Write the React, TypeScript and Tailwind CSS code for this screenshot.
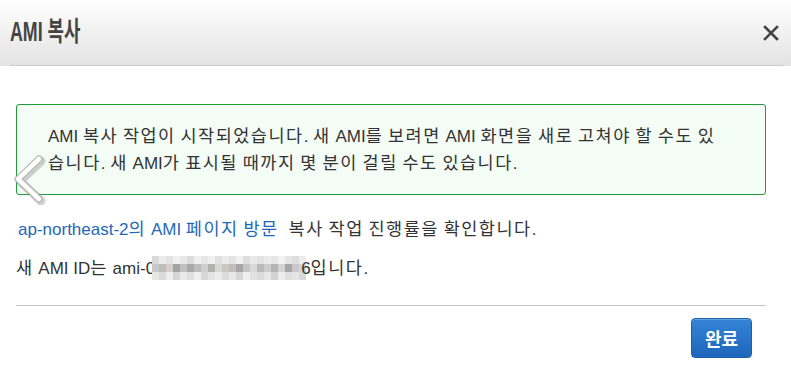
import { Fragment } from "react";

const font = { fontFamily: '"Liberation Sans", Arial, "Noto Sans CJK KR", sans-serif' };

// wrap hangul runs so they space out like the original Malgun rendering
function K({ t }: { t: string }) {
  return (
    <>
      {t.split(/([\uAC00-\uD7A3]+)/).map((s, i) =>
        /[\uAC00-\uD7A3]/.test(s) ? (
          <span key={i} className="text-[17.5px] tracking-[1.5px]" style={{ fontFamily: '"Noto Sans CJK KR", sans-serif' }}>{s}</span>
        ) : (
          <Fragment key={i}>{s}</Fragment>
        )
      )}
    </>
  );
}

// pixelated cells standing in for the masked AMI id
const blur = [
  ["#d9d9d9", "#ececec", "#e3e3e3", "#f0f0f0", "#e8e8e8", "#dcdcdc", "#eeeeee", "#e6e6e6", "#efefef", "#e0e0e0", "#ebebeb", "#e4e4e4", "#f1f1f1", "#dedede", "#e9e9e9", "#e2e2e2", "#eaeaea", "#e7e7e7", "#f2f2f2", "#e5e5e5", "#dddddd", "#ededed"],
  ["#c8c8c8", "#bdbdbd", "#d4cfca", "#a4a4a4", "#c1c1c1", "#a9a9a9", "#bcbcbc", "#cfcfcf", "#b1b1b1", "#d6d6d6", "#cac6c2", "#bfbfbf", "#a7a7a7", "#c5c5c5", "#d8d8d8", "#bababa", "#cdcdcd", "#b4b4b4", "#d2d2d2", "#a6a6a6", "#c9c9c9", "#d3d3d3"],
  ["#e6e6e6", "#dadada", "#eeeeee", "#d5d5d5", "#e9e9e9", "#e0e0e0", "#f0f0f0", "#d8d8d8", "#e3e3e3", "#ececec", "#dcdcdc", "#e8e8e8", "#d6d6d6", "#efefef", "#e2e2e2", "#dbdbdb", "#e7e7e7", "#d3d3d3", "#ededed", "#dfdfdf", "#e5e5e5", "#d9d9d9"],
];

export default function App() {
  return (
    <div className="w-[791px] h-[367px] bg-white relative overflow-hidden text-[#333]" style={font}>
      <div className="h-[66px] bg-gradient-to-b from-white to-[#e3e3e3]">
        <div className="h-full ml-[10px] mr-[8px] flex items-center justify-between pr-[4px] border-b border-[#c9c9c9]">
          <h1 className="text-[27px] font-bold text-[#444] scale-x-[0.66] origin-left whitespace-nowrap leading-none -mt-[1px]">AMI 복사</h1>
          <svg width="16" height="16" viewBox="0 0 16 16" className="mt-[1px]">
            <path d="M2 2 L14 14 M14 2 L2 14" stroke="#444" strokeWidth="2.6" strokeLinecap="square" />
          </svg>
        </div>
      </div>

      <div className="ml-4 w-[750px] pt-[38px]">
        <div className="h-[91px] border border-[#1e9b3c] rounded-[3px] bg-[#f4fcf6] pl-[31px] pt-[16px] text-[17px] whitespace-nowrap">
          <div className="h-[27px] leading-[27px]"><K t="AMI 복사 작업이 시작되었습니다. 새 AMI를 보려면 AMI 화면을 새로 고쳐야 할 수도 있" /></div>
          <div className="h-[27px] leading-[27px]"><K t="습니다. 새 AMI가 표시될 때까지 몇 분이 걸릴 수도 있습니다." /></div>
        </div>

        <p className="mt-[21px] pl-[2px] h-[24px] text-[17px] leading-[24px] whitespace-nowrap">
          <span className="text-[#1f68b8]"><K t="ap-northeast-2의 AMI 페이지 방문" /></span>
          <span className="ml-[10px]"><K t="복사 작업 진행률을 확인합니다." /></span>
        </p>

        <p className="mt-[16px] h-[24px] text-[17px] leading-[24px] flex items-center whitespace-nowrap">
          <span><K t="새 AMI ID는 ami-0" /></span>
          <span className="inline-grid grid-cols-[repeat(22,7px)] grid-rows-[repeat(3,8px)] -ml-[3px]">
            {blur.map((row, r) => (
              <Fragment key={r}>
                {row.map((c, i) => (
                  <span key={i} style={{ background: c }} />
                ))}
              </Fragment>
            ))}
          </span>
          <span className="-ml-[5px]"><K t="6입니다." /></span>
        </p>

        <div className="mt-[25px] border-t border-[#c4c4c4]" />

        <div className="flex justify-end pr-[14px] pt-[12px]">
          <button className="w-[61px] h-[40px] rounded-[4px] border border-[#1d5fa8] bg-gradient-to-b from-[#3384d8] to-[#1e66bb] text-white font-bold text-[18px] shadow-[inset_0_1px_0_rgba(255,255,255,0.25)]" style={{ fontFamily: '"Noto Sans CJK KR", sans-serif' }}>
            완료
          </button>
        </div>
      </div>

      {/* carousel arrow overlay */}
      <svg width="40" height="52" viewBox="0 0 40 52" className="absolute left-[10px] top-[153px]">
        <path d="M30 7 L9 27 L30 47" fill="none" stroke="#7a7a7a" strokeWidth="9" strokeLinecap="round" strokeLinejoin="round" opacity="0.35" transform="translate(1 1)" />
        <path d="M29 6 L8 26 L29 46" fill="none" stroke="#b5b5b5" strokeWidth="7" strokeLinecap="round" strokeLinejoin="round" />
        <path d="M29 6 L8 26 L29 46" fill="none" stroke="#ffffff" strokeWidth="4.5" strokeLinecap="round" strokeLinejoin="round" />
      </svg>
    </div>
  );
}
